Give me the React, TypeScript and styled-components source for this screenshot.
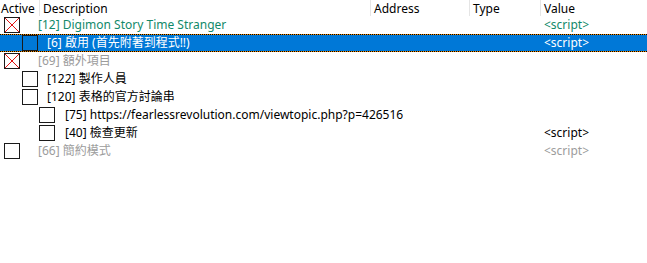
import styled, { createGlobalStyle } from 'styled-components';

const GlobalStyle = createGlobalStyle`
  html, body {
    margin: 0;
    padding: 0;
    background: #ffffff;
  }
  body {
    font-family: 'Noto Sans', 'Noto Sans CJK TC', sans-serif;
    font-size: 12px;
    color: #000000;
  }
`;

type Tone = 'normal' | 'green' | 'gray';

interface Entry {
  id: number;
  label: string;
  level: number;
  checked?: boolean;
  tone?: Tone;
  value?: string;
  selected?: boolean;
}

const entries: Entry[] = [
  { id: 12, label: 'Digimon Story Time Stranger', level: 0, checked: true, tone: 'green', value: '<script>' },
  { id: 6, label: '啟用 (首先附著到程式!!)', level: 1, value: '<script>', selected: true },
  { id: 69, label: '額外項目', level: 0, checked: true, tone: 'gray' },
  { id: 122, label: '製作人員', level: 1 },
  { id: 120, label: '表格的官方討論串', level: 1 },
  { id: 75, label: 'https://fearlessrevolution.com/viewtopic.php?p=426516', level: 2 },
  { id: 40, label: '檢查更新', level: 2, value: '<script>' },
  { id: 66, label: '簡約模式', level: 0, tone: 'gray', value: '<script>' },
];

// box left edge and text left edge per level
const boxLeft = [4, 22, 39];
const textLeft = [38, 47, 65];

const toneColor = (tone: Tone | undefined, selected?: boolean) => {
  if (selected) return '#ffffff';
  if (tone === 'green') return '#11896a';
  if (tone === 'gray') return '#9c9c9c';
  return '#000000';
};

function App() {
  return (
    <>
      <GlobalStyle />
      <Table>
        <Header>
          <HeadCell>Active</HeadCell>
          <HeadCell>Description</HeadCell>
          <HeadCell>Address</HeadCell>
          <HeadCell>Type</HeadCell>
          <HeadCell $last>Value</HeadCell>
        </Header>
        {entries.map((e) => (
          <Row key={e.id} $selected={e.selected}>
            <Tree>
              <Box $left={boxLeft[e.level]} $selected={e.selected}>
                {e.checked && (
                  <svg width='14' height='14' viewBox='0 0 14 14'>
                    <line x1='0' y1='0' x2='14' y2='14' stroke='#e01010' strokeWidth='1' />
                    <line x1='14' y1='0' x2='0' y2='14' stroke='#e01010' strokeWidth='1' />
                  </svg>
                )}
              </Box>
              <Label
                $left={textLeft[e.level] - boxLeft[e.level] - 16}
                $color={toneColor(e.tone, e.selected)}
              >
                [{e.id}] {e.label}
              </Label>
            </Tree>
            <Value $color={toneColor(e.tone, e.selected)}>{e.value}</Value>
          </Row>
        ))}
      </Table>
    </>
  );
}

export default App;

const Table = styled.div`
  width: 647px;
  height: 263px;
  background: #ffffff;
  overflow: hidden;
`;

const Header = styled.div`
  display: grid;
  grid-template-columns: 40px 331px 99px 71px 1fr;
  height: 16px;
`;

const HeadCell = styled.div<{ $last?: boolean }>`
  display: flex;
  align-items: center;
  padding-left: ${(p) => (p.$last ? '3px' : '2px')};
  line-height: 15px;
  height: 16px;
  color: #000000;
  border-right: ${(p) => (p.$last ? 'none' : '1px solid #e5e5e5')};
  box-sizing: border-box;
  &:first-child {
    padding-left: 1px;
  }
  &:not(:first-child) {
    padding-left: 3px;
  }
`;

const Row = styled.div<{ $selected?: boolean }>`
  display: grid;
  grid-template-columns: 544px 1fr;
  height: 18px;
  align-items: center;
  background: ${(p) =>
    p.$selected
      ? `repeating-linear-gradient(90deg, #000 0 1px, #f08a00 1px 2px) top / 100% 1px no-repeat,
         repeating-linear-gradient(90deg, #000 0 1px, #f08a00 1px 2px) bottom / 100% 1px no-repeat,
         #0078d7`
      : 'transparent'};
`;

const Tree = styled.div`
  display: flex;
  align-items: center;
  min-width: 0;
  white-space: nowrap;
`;

const Box = styled.div<{ $left: number; $selected?: boolean }>`
  width: 16px;
  height: 16px;
  box-sizing: border-box;
  margin-left: ${(p) => p.$left}px;
  border: 1px solid #1a1a1a;
  background: ${(p) => (p.$selected ? 'transparent' : '#ffffff')};
  flex: none;
  display: flex;
  svg {
    display: block;
  }
`;

const Label = styled.span<{ $left: number; $color: string }>`
  margin-left: ${(p) => p.$left}px;
  color: ${(p) => p.$color};
  line-height: 16px;
`;

const Value = styled.span<{ $color: string }>`
  color: ${(p) => p.$color};
  line-height: 16px;
  white-space: nowrap;
`;
